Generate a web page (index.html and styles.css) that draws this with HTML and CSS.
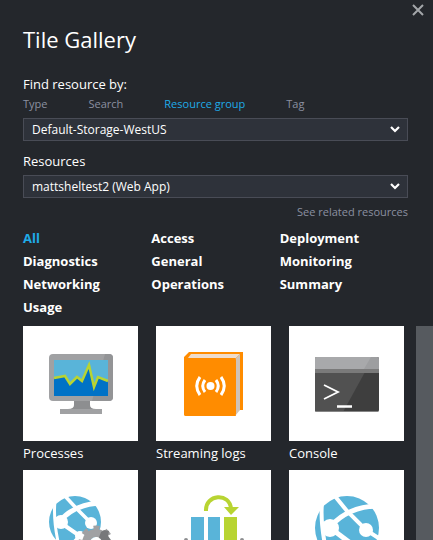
FILE: index.html
```html
<!DOCTYPE html>
<html lang="en">
<head>
<meta charset="utf-8">
<title>Tile Gallery</title>
<link rel="stylesheet" href="styles.css">
</head>
<body>
<main class="gallery">
  <header class="top">
    <button class="close" type="button" aria-label="Close">
      <svg width="12" height="12" viewBox="0 0 12 12"><path d="M1 1L11 11M11 1L1 11" fill="none" stroke="#a3a6a9" stroke-width="2"/></svg>
    </button>
    <h1>Tile Gallery</h1>
  </header>

  <section class="filters">
    <label class="label" for="group">Find resource by:</label>
    <nav class="tabs">
      <a href="#type">Type</a>
      <a href="#search">Search</a>
      <a href="#group" class="active">Resource group</a>
      <a href="#tag">Tag</a>
    </nav>
    <div class="select">
      <select id="group"><option>Default-Storage-WestUS</option></select>
      <svg class="chevron" width="10" height="7" viewBox="0 0 10 7"><path d="M1 1L5 5L9 1" fill="none" stroke="#fff" stroke-width="2.2"/></svg>
    </div>
    <label class="label resources" for="resource">Resources</label>
    <div class="select">
      <select id="resource"><option>mattsheltest2 (Web App)</option></select>
      <svg class="chevron" width="10" height="7" viewBox="0 0 10 7"><path d="M1 1L5 5L9 1" fill="none" stroke="#fff" stroke-width="2.2"/></svg>
    </div>
    <a class="related" href="#related">See related resources</a>
  </section>

  <nav class="categories">
    <a href="#all" class="active">All</a>
    <a href="#access">Access</a>
    <a href="#deployment">Deployment</a>
    <a href="#diagnostics">Diagnostics</a>
    <a href="#general">General</a>
    <a href="#monitoring">Monitoring</a>
    <a href="#networking">Networking</a>
    <a href="#operations">Operations</a>
    <a href="#summary">Summary</a>
    <a href="#usage">Usage</a>
  </nav>

  <section class="results">
    <div class="tiles">
      <figure class="tile">
        <div class="art">
          <svg viewBox="0 0 115 115">
            <path d="M51 74H67V79Q67 83 73 83H79V88H37V83H45Q51 83 51 79Z" fill="#8d8e90"/>
            <path d="M37 83H79V88H37Z" fill="#a0a1a3"/>
            <rect x="26" y="28" width="64" height="47" rx="4" fill="#a0a1a3"/>
            <path d="M82 28H86Q90 28 90 32V71Q90 75 86 75H69Z" fill="#939496"/>
            <rect x="31" y="34" width="54" height="36" fill="#59b4d9"/>
            <path d="M31 52L42 50L47 58L54 51L59 55L66 39L71 61L75 51L85 55V70H31Z" fill="#0072c6"/>
            <path d="M31 52L42 50L47 58L54 51L59 55L66 39L71 61L75 51L85 55" fill="none" stroke="#b8d432" stroke-width="2.5"/>
          </svg>
        </div>
        <figcaption>Processes</figcaption>
      </figure>
      <figure class="tile">
        <div class="art">
          <svg viewBox="0 0 115 115">
            <path d="M33 26H87V84H80V90H30Q28 90 28 88V31Z" fill="#ff8c00"/>
            <path d="M35 28H84L80 32H32Z" fill="#efdccb"/>
            <path d="M84 28V84L79 90V33Z" fill="#cfc3b8"/>
            <rect x="28" y="32" width="52" height="58" rx="2" fill="#ff8c00"/>
            <circle cx="54.5" cy="60" r="4" fill="#fff"/>
            <path d="M49 54Q44.5 60 49 66M60 54Q64.5 60 60 66M44 51Q37.5 60 44 69M65 51Q71.5 60 65 69" fill="none" stroke="#fff" stroke-width="3"/>
          </svg>
        </div>
        <figcaption>Streaming logs</figcaption>
      </figure>
      <figure class="tile">
        <div class="art">
          <svg viewBox="0 0 115 115">
            <rect x="26" y="31" width="64" height="55" rx="2" fill="#3e3e3e"/>
            <path d="M26 46H76L54 86H28Q26 86 26 84Z" fill="#515151"/>
            <path d="M26 47V33Q26 31 28 31H88Q90 31 90 33V47Z" fill="#7a7a7a"/>
            <path d="M26 43V33Q26 31 28 31H88Q90 31 90 33V43Z" fill="#9d9ea0"/>
            <path d="M26 43V33Q26 31 28 31H82L75 43Z" fill="#a8a9ab"/>
            <path d="M27 85.5H89" stroke="#858585"/>
            <path d="M35 59L49 66L35 73" fill="none" stroke="#fff" stroke-width="1.8"/>
            <path d="M48 80.5H63" stroke="#fff" stroke-width="2.5"/>
          </svg>
        </div>
        <figcaption>Console</figcaption>
      </figure>
      <figure class="tile">
        <div class="art">
          <svg viewBox="0 0 115 115">
            <circle cx="52" cy="52" r="26" fill="#59b4d9"/>
            <g fill="none" stroke="#fff">
              <path d="M32 31Q30 51 36 76" stroke-width="3"/>
              <path d="M36 52Q51 34 78 33" stroke-width="5"/>
              <path d="M41 25L53 38L68 53" stroke-width="3.5"/>
              <path d="M38 53L57 66L44 80" stroke-width="4"/>
            </g>
            <circle cx="38" cy="52" r="7" fill="#fff"/><circle cx="68" cy="53" r="6" fill="#fff"/><circle cx="57" cy="66" r="5" fill="#fff"/>
            <circle cx="73" cy="73" r="10" fill="none" stroke="#a0a1a3" stroke-width="8"/>
            <circle cx="73" cy="73" r="15" fill="none" stroke="#a0a1a3" stroke-width="5" stroke-dasharray="5.89 5.89" stroke-dashoffset="2.9"/>
            <path d="M78 62L81 60L86 61L85 66L88 70L73 75Z" fill="#77787a"/>
            <circle cx="73" cy="73" r="6" fill="#fff"/>
          </svg>
        </div>
      </figure>
      <figure class="tile">
        <div class="art">
          <svg viewBox="0 0 115 115">
            <path d="M35 47H48V90H35ZM52 47H64V90H52Z" fill="#59b4d9"/>
            <path d="M68 47H81V90H68Z" fill="#b8d432"/>
            <path d="M50 41C49 24 74 22 75 39" fill="none" stroke="#b8d432" stroke-width="4"/>
            <path d="M68 37H83L75 45Z" fill="#b8d432"/>
            <circle cx="30" cy="70" r="2" fill="#8d8e90"/><circle cx="86" cy="70" r="2" fill="#8d8e90"/>
          </svg>
        </div>
      </figure>
      <figure class="tile">
        <div class="art">
          <svg viewBox="0 0 115 115">
            <circle cx="58" cy="58" r="32" fill="#59b4d9"/>
            <g fill="none" stroke="#fff">
              <path d="M33 33Q31 53 38 85" stroke-width="4"/>
              <path d="M40 58Q59 36 89 36" stroke-width="5"/>
              <path d="M45 25L58 41L77 60L94 71" stroke-width="4"/>
              <path d="M40 57L64 75" stroke-width="5"/>
            </g>
            <circle cx="41" cy="58" r="9" fill="#fff"/><circle cx="77" cy="60" r="7" fill="#fff"/>
            <path d="M38 71Q43 66 48 71Z" fill="#59b4d9"/>
          </svg>
        </div>
      </figure>
    </div>
    <div class="scrollbar"></div>
  </section>
</main>
</body>
</html>
```
FILE: styles.css
```css
* { box-sizing: border-box; }
body {
  margin: 0;
  background: #24272c;
  color: #fff;
  font: 13px/20px "Open Sans", "Noto Sans", sans-serif;
}
a { color: inherit; text-decoration: none; }
.gallery {
  height: 100vh;
  display: flex;
  flex-direction: column;
  overflow: hidden;
}
.top {
  display: flex;
  flex-direction: column;
  padding: 4px 9px 0 23px;
}
.close {
  align-self: flex-end;
  display: flex;
  padding: 0;
  border: 0;
  background: none;
}
h1 {
  margin: 7px 0 0;
  font-size: 22px;
  line-height: 32px;
  font-weight: 400;
}
.filters {
  display: flex;
  flex-direction: column;
  padding: 19px 25px 0 23px;
}
.tabs {
  display: flex;
  gap: 41px;
  color: #8b90a0;
  font-size: 11px;
  margin-bottom: 4px;
}
.tabs .active, .categories .active { color: #1fabe8; }
.select { display: grid; align-items: center; }
.select > * { grid-area: 1 / 1; }
select {
  appearance: none;
  width: 100%;
  height: 23px;
  padding: 0 8px;
  border: 1px solid #494c56;
  border-radius: 0;
  background: #2e323a;
  color: #fff;
  font: 12px/20px "Open Sans", "Noto Sans", sans-serif;
}
.chevron {
  justify-self: end;
  margin-right: 8px;
  pointer-events: none;
}
.resources { margin: 10px 0 4px; }
.related {
  align-self: flex-end;
  margin-top: 4px;
  color: #8b90a0;
  font-size: 11px;
}
.categories {
  display: grid;
  grid-template-columns: repeat(3, 1fr);
  padding: 5px 25px 0 23px;
  line-height: 23px;
  font-weight: 700;
}
.results {
  flex: 1;
  min-height: 0;
  display: flex;
  gap: 12px;
  margin-top: 7px;
  padding-left: 23px;
}
.tiles {
  flex: 1;
  display: grid;
  grid-template-columns: repeat(3, 1fr);
  align-content: start;
  gap: 4px 18px;
}
.tile { margin: 0; }
.art { background: #fff; }
.art svg { display: block; width: 100%; }
figcaption { padding: 2px 0 3px; }
.scrollbar { width: 17px; background: #565a5f; }
```
